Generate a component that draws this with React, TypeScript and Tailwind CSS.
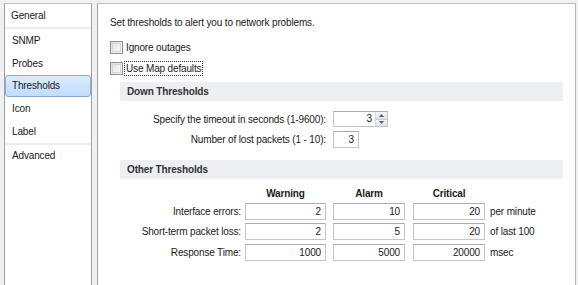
import React from "react";

const font = { fontFamily: '"Liberation Sans", Arial, sans-serif', letterSpacing: "-0.15px" };

function Checkbox({ label, focused }: { label: string; focused?: boolean }) {
  return (
    <div className="flex items-center h-[15px]">
      <div className="w-[13px] h-[13px] border border-[#8f8f8f] bg-gradient-to-br from-[#dcdcdc] to-[#fbfbfb] p-px">
        <div className="w-full h-full border border-[#d6d6d6] bg-gradient-to-br from-[#e4e4e4] to-[#f8f8f8]" />
      </div>
      <span
        className={
          "ml-px px-px h-[15px] flex items-center " +
          (focused ? "border border-dotted border-[#333]" : "border border-transparent")
        }
      >
        {label}
      </span>
    </div>
  );
}

function Input({ value, w }: { value: string; w: string }) {
  return (
    <div
      className={
        w +
        " shrink-0 h-[17px] border border-[#c5c5c5] border-t-[#abadb3] bg-white flex items-center justify-end pr-[4px] leading-none"
      }
    >
      {value}
    </div>
  );
}

function Band({ title, h }: { title: string; h: string }) {
  return (
    <div className={"ml-[22px] mr-[12px] bg-[#eeeff3] flex items-center pl-[7px] font-bold text-[#333] " + h}>
      {title}
    </div>
  );
}

export default function App() {
  const items = ["SNMP", "Probes", "Thresholds", "Icon", "Label"];
  const rows = [
    ["Interface errors:", "2", "10", "20", "per minute", "mt-0"],
    ["Short-term packet loss:", "2", "5", "20", "of last 100", "mt-[3px]"],
    ["Response Time:", "1000", "5000", "20000", "msec", "mt-[4px]"],
  ];
  return (
    <div
      className="w-[578px] h-[285px] bg-[#f0f0f0] overflow-hidden flex pl-[4px] pt-[3px] gap-[5px] text-[10px] text-[#1a1a1a]"
      style={font}
    >
      <div className="w-[88px] h-[300px] shrink-0 border border-[#a0a0a0] border-t-[#c0c0c0] bg-white">
        <div className="h-[23px] flex items-center pl-[6px]">General</div>
        <div className="h-[2px] bg-[#ededed]" />
        {items.map((it) => (
          <div key={it} className="h-[22.75px] flex items-center">
            {it === "Thresholds" ? (
              <div className="w-full h-[22px] rounded-[3px] border border-[#84acdd] bg-gradient-to-b from-[#dcebfd] to-[#c1dcfc] flex items-center pl-[6px]">
                {it}
              </div>
            ) : (
              <span className="pl-[7px]">{it}</span>
            )}
          </div>
        ))}
        <div className="h-[2px] bg-[#ededed]" />
        <div className="h-[21px] flex items-center pl-[7px]">Advanced</div>
      </div>

      <div className="w-[479px] h-[300px] shrink-0 border border-[#a0a0a0] border-t-[#c0c0c0] border-r-[#b8b8b8] bg-white">
        <div className="pl-[12px] mt-[11px] h-[14px] flex items-center">
          Set thresholds to alert you to network problems.
        </div>
        <div className="pl-[12px] flex flex-col gap-[6px] mt-[11px]">
          <Checkbox label="Ignore outages" />
          <Checkbox label="Use Map defaults" focused />
        </div>
        <div className="mt-[6px]">
          <Band title="Down Thresholds" h="h-[19px]" />
        </div>
        <div className="mt-[10px] flex items-center">
          <div className="w-[228px] mr-[7px] text-right">Specify the timeout in seconds (1-9600):</div>
          <div className="w-[55px] h-[16px] border border-[#c5c5c5] border-t-[#abadb3] bg-white flex">
            <div className="flex-1 flex items-center justify-end pr-[3px] leading-none">3</div>
            <div className="w-[12px] flex flex-col border-l border-[#d5d5d5]">
              <div className="flex-1 bg-gradient-to-b from-[#f4f4f4] to-[#e2e2e2] border-b border-[#c9c9c9] flex items-center justify-center">
                <svg width="5" height="3" viewBox="0 0 5 3"><path d="M2.5 0 L5 3 L0 3Z" fill="#4a5a7a" /></svg>
              </div>
              <div className="flex-1 bg-gradient-to-b from-[#f4f4f4] to-[#e2e2e2] flex items-center justify-center">
                <svg width="5" height="3" viewBox="0 0 5 3"><path d="M0 0 L5 0 L2.5 3Z" fill="#4a5a7a" /></svg>
              </div>
            </div>
          </div>
        </div>
        <div className="mt-[4px] flex items-center">
          <div className="w-[228px] mr-[7px] text-right">Number of lost packets (1 - 10):</div>
          <Input value="3" w="w-[26px]" />
        </div>
        <div className="mt-[12px]">
          <Band title="Other Thresholds" h="h-[19px]" />
        </div>
        <div className="mt-[7px] h-[14px] flex items-center font-bold">
          <div className="w-[143px] mr-[4px]" />
          <div className="w-[81px] mr-[7px] text-center">Warning</div>
          <div className="w-[72px] mr-[8px] text-center">Alarm</div>
          <div className="w-[72px] text-center">Critical</div>
        </div>
        <div className="mt-[3px] flex flex-col">
          {rows.map((r) => (
            <div key={r[0]} className={"flex items-center " + r[5]}>
              <div className="w-[143px] mr-[4px] text-right">{r[0]}</div>
              <Input value={r[1]} w="w-[81px] mr-[7px]" />
              <Input value={r[2]} w="w-[72px] mr-[8px]" />
              <Input value={r[3]} w="w-[72px] mr-[5px]" />
              <div>{r[4]}</div>
            </div>
          ))}
        </div>
      </div>
    </div>
  );
}
